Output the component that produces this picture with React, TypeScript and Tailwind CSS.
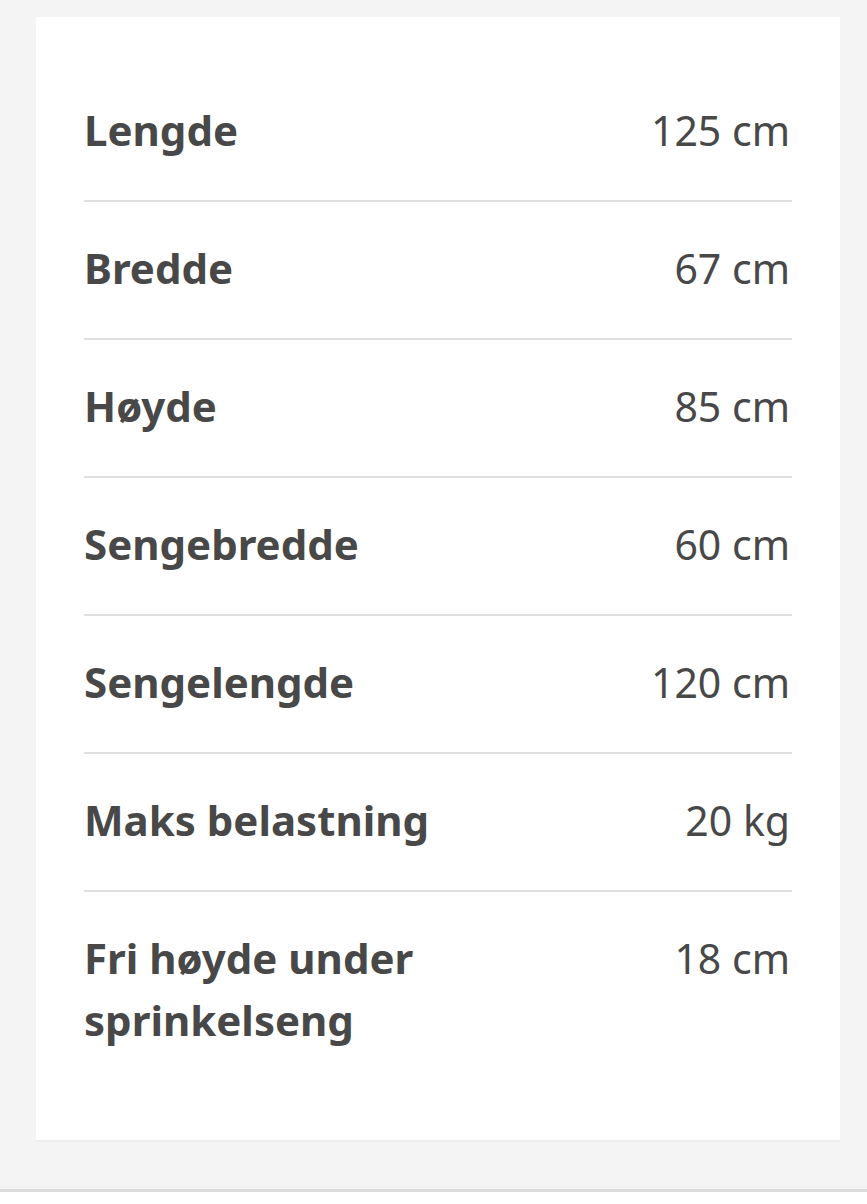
const rows: { label: string; value: string }[] = [
  { label: "Lengde", value: "125 cm" },
  { label: "Bredde", value: "67 cm" },
  { label: "Høyde", value: "85 cm" },
  { label: "Sengebredde", value: "60 cm" },
  { label: "Sengelengde", value: "120 cm" },
  { label: "Maks belastning", value: "20 kg" },
  { label: "Fri høyde under sprinkelseng", value: "18 cm" },
]

export default function App() {
  return (
    <div
      className="min-h-[1204px] bg-[#f4f4f4] text-[#484848]"
      style={{ fontFamily: '"Noto Sans", "Open Sans", sans-serif' }}
    >
      <div className="pt-[17px] pl-[36px] pr-[27px] pb-[47px] border-b-[3px] border-[#dcdcdc]">
        {/* Spec card */}
        <div className="bg-white px-[48px] pt-[47px] pb-[50px] border-b-2 border-[#ececec]">
          {rows.map((row, i) => (
            <div
              key={row.label}
              className={`grid grid-cols-2 items-start pt-[35px] pb-[39px] ${
                i < rows.length - 1 ? "border-b-2 border-[#dfdfdf]" : ""
              }`}
            >
              <div className="text-[42px] leading-[62px] font-bold">{row.label}</div>
              <div className="text-[41px] leading-[62px] text-right pr-[2px]">{row.value}</div>
            </div>
          ))}
        </div>
      </div>
      <div className="bg-white h-[20px]" />
    </div>
  )
}
